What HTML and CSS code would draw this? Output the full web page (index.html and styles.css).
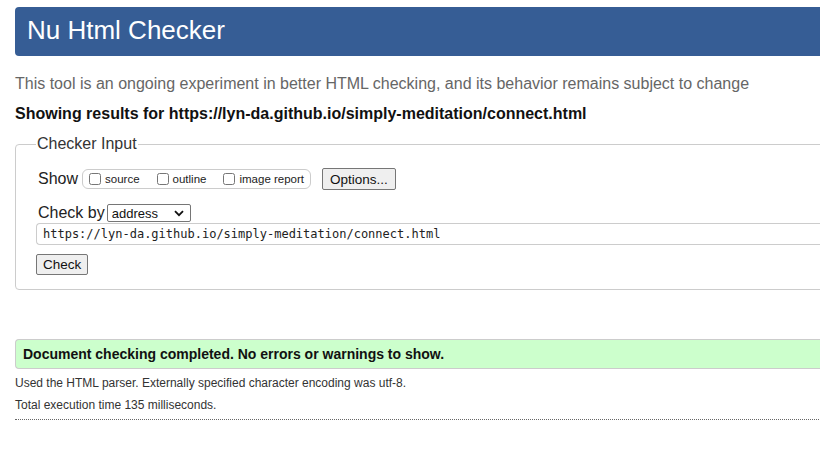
FILE: index.html
```html
<!DOCTYPE html>
<html lang="en">
<head>
  <meta charset="UTF-8">
  <title>Showing results for https://lyn-da.github.io/simply-meditation/connect.html - Nu Html Checker</title>
  <link rel="stylesheet" href="styles.css">
</head>
<body>
  <div class="page">
    <h1 class="title">Nu Html Checker</h1>
    <p class="intro">This tool is an ongoing experiment in better HTML checking, and its behavior remains subject to change</p>
    <p class="showing">Showing results for https://lyn-da.github.io/simply-meditation/connect.html</p>

    <form class="checker">
      <fieldset class="input-box">
        <legend>Checker Input</legend>
        <div class="row">
          <span class="label">Show</span>
          <span class="show-opts">
            <label><input type="checkbox"> source</label>
            <label><input type="checkbox"> outline</label>
            <label><input type="checkbox"> image report</label>
          </span>
          <button type="button" class="btn opts-btn">Options...</button>
        </div>
        <div class="row">
          <span class="label">Check by</span>
          <span class="select">address <svg width="10" height="7" viewBox="0 0 10 7"><path d="M1 1.2 L5 5.2 L9 1.2" fill="none" stroke="#111" stroke-width="1.8"/></svg></span>
        </div>
        <div class="url">https://lyn-da.github.io/simply-meditation/connect.html</div>
        <button type="button" class="btn check-btn">Check</button>
      </fieldset>
    </form>

    <p class="success">Document checking completed. No errors or warnings to show.</p>
    <p class="details">Used the HTML parser. Externally specified character encoding was utf-8.</p>
    <p class="details">Total execution time 135 milliseconds.</p>
    <hr class="dots">
  </div>
</body>
</html>
```

FILE: styles.css
```css
html, body { margin: 0; overflow: hidden; background: #fff; }
body { font-family: 'Liberation Sans', Arial, sans-serif; color: #111; }
.page { width: 900px; padding: 7px 0 0 15px; }

.title { margin: 0; height: 49px; line-height: 47px; padding: 0 12px; background: #365d95; color: #fff; font-size: 26px; font-weight: normal; border-radius: 4px 0 0 4px; }
.intro { margin: 18px 0 0; font-size: 16px; color: #666; line-height: 20px; }
.showing { margin: 10px 0 0; font-size: 16px; font-weight: bold; line-height: 20px; }

.checker { margin: 11px 0 0; }
.input-box { margin: 0; padding: 14px 20px 14px 22px; border: 1px solid #ccc; border-radius: 4px 0 0 4px; }
.input-box legend { font-size: 16px; color: #333; padding: 0 1px; margin-left: -2px; }
.row { display: flex; align-items: center; height: 24px; margin-bottom: 10px; }
.label { font-size: 16px; color: #222; margin-right: 4px; }
.show-opts { display: flex; align-items: center; height: 18px; border: 1px solid #ccc; border-radius: 6px; padding: 0 6px 0 6px; gap: 17px; }
.show-opts label { display: flex; align-items: center; font-size: 11.5px; color: #222; }
.show-opts input { width: 12px; height: 12px; margin: 0 4px 0 0; }
.btn { font-family: 'Liberation Sans', Arial, sans-serif; font-size: 13px; color: #111; background: #efefef; border: 1px solid #767676; border-radius: 2px; padding: 1px 6px; }
.opts-btn { margin-left: 11px; height: 22px; font-size: 13.5px; padding: 0 7px; }
.select { display: inline-flex; align-items: center; justify-content: space-between; width: 72px; height: 16px; margin-left: -2px; border: 1px solid #767676; border-radius: 2px; padding: 0 6px 0 4px; font-size: 13px; }
.url { margin: -12px -20px 0 -2px; height: 20px; line-height: 20px; border: 1px solid #ccc; border-right: 0; border-radius: 4px 0 0 4px; padding: 0 6px; font-family: 'DejaVu Sans Mono', monospace; font-size: 12px; color: #222; }
.check-btn { margin: 9px 0 0 -2px; height: 21px; font-size: 13.5px; }

.success { margin: 49px 0 0; height: 28px; line-height: 28px; padding: 0 7px; background: #ccffcc; border: 1px solid #ccc; border-right: 0; border-radius: 4px 0 0 4px; font-size: 14px; font-weight: bold; }
.details { margin: 6px 0 0; font-size: 12px; color: #333; line-height: 16px; }
.details + .details { margin-top: 6px; }
.dots { margin: 6px 0 0; border: 0; border-top: 1px dotted #666; }
```
